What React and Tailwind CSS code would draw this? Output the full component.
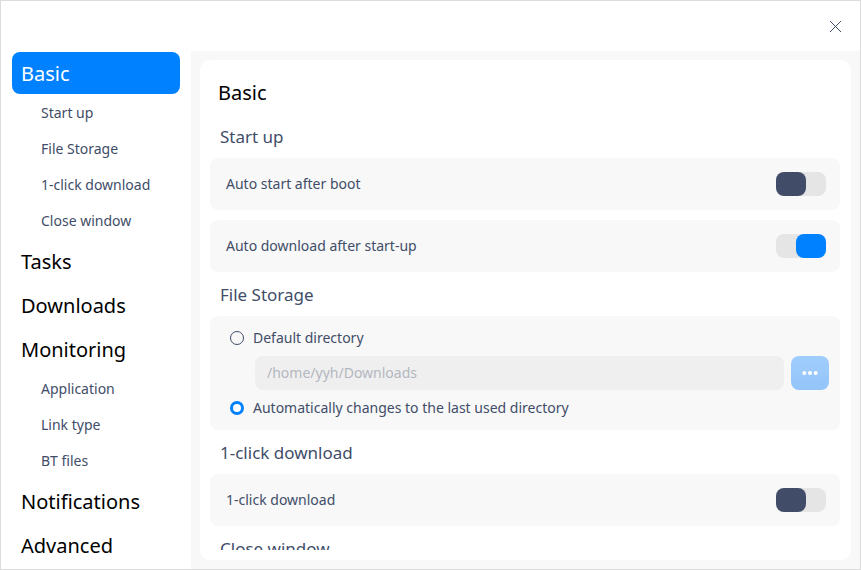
import { useState } from 'react';

const NAV = [
  { name: 'Basic', items: ['Start up', 'File Storage', '1-click download', 'Close window'] },
  { name: 'Tasks', items: [] },
  { name: 'Downloads', items: [] },
  { name: 'Monitoring', items: ['Application', 'Link type', 'BT files'] },
  { name: 'Notifications', items: [] },
  { name: 'Advanced', items: [] },
];

function Sidebar() {
  return (
    <nav className="w-[190px] shrink-0 overflow-y-auto bg-white px-[11px] [scrollbar-width:none]">
      <ul>
        {NAV.map((group, index) => (
          <li key={group.name}>
            <div className="py-px">
              <a
                href="#"
                aria-current={index === 0 ? 'page' : undefined}
                className={
                  'flex h-[42px] items-center rounded-lg px-[9px] pt-0.5 text-xl ' +
                  (index === 0 ? 'bg-[#0081ff] text-white' : 'text-black')
                }
              >
                {group.name}
              </a>
            </div>
            {group.items.length > 0 && (
              <ul>
                {group.items.map((item) => (
                  <li key={item}>
                    <a href="#" className="flex h-9 items-center pl-[29px] text-sm">
                      {item}
                    </a>
                  </li>
                ))}
              </ul>
            )}
          </li>
        ))}
      </ul>
    </nav>
  );
}

function SectionTitle({ children }) {
  return <h2 className="flex h-11 items-center px-2.5 pt-0.5 text-[17px]">{children}</h2>;
}

function ToggleRow({ label, initial = false }) {
  const [on, setOn] = useState(initial);
  return (
    <label className="flex h-[52px] items-center justify-between rounded-lg bg-[#f8f8f8] pr-3.5 pl-4">
      <span>{label}</span>
      <input
        type="checkbox"
        role="switch"
        checked={on}
        onChange={(event) => setOn(event.target.checked)}
        className="flex h-6 w-[50px] appearance-none rounded-lg bg-[#e5e5e5] before:h-6 before:w-[30px] before:rounded-lg before:bg-[#414d68] checked:justify-end checked:before:bg-[#0081ff]"
      />
    </label>
  );
}

function DirectoryOption({ value, label, selected, onSelect }) {
  return (
    <label className="flex h-9 items-center gap-[9px]">
      <input
        type="radio"
        name="directory"
        value={value}
        checked={selected === value}
        onChange={() => onSelect(value)}
        className="size-3.5 appearance-none rounded-full border border-[#414d68] checked:border-3 checked:border-[#0081ff] checked:bg-white"
      />
      {label}
    </label>
  );
}

function FileStorage() {
  const [directory, setDirectory] = useState('last');
  const disabled = directory !== 'default';
  return (
    <div className="rounded-lg bg-[#f8f8f8] py-1 pr-[11px] pl-5">
      <DirectoryOption
        value="default"
        label="Default directory"
        selected={directory}
        onSelect={setDirectory}
      />
      <div className="flex gap-[7px] pl-[25px]">
        <input
          type="text"
          aria-label="Default directory path"
          defaultValue="/home/yyh/Downloads"
          disabled={disabled}
          className="h-[34px] min-w-0 flex-1 rounded-lg bg-[#efefef] px-3 pb-0.5 text-[#b3b7c0]"
        />
        <button
          type="button"
          aria-label="Choose directory"
          disabled={disabled}
          className="flex h-[34px] w-[38px] items-center justify-center rounded-lg bg-linear-to-b from-[#9fcdfc] to-[#94c5f9]"
        >
          <svg width="16" height="4" viewBox="0 0 16 4" fill="white" aria-hidden="true">
            <circle cx="2.3" cy="2" r="2" />
            <circle cx="8" cy="2" r="2" />
            <circle cx="13.7" cy="2" r="2" />
          </svg>
        </button>
      </div>
      <DirectoryOption
        value="last"
        label="Automatically changes to the last used directory"
        selected={directory}
        onSelect={setDirectory}
      />
    </div>
  );
}

export default function App() {
  return (
    <div className="flex h-screen flex-col border border-[#dcdcdc] bg-white font-['Noto_Sans',sans-serif] text-sm text-[#414d68]">
      <header className="flex h-[50px] shrink-0 items-center justify-end">
        <button type="button" aria-label="Close" className="flex size-[50px] items-center justify-center">
          <svg width="12" height="12" viewBox="0 0 12 12" stroke="#414d68" strokeWidth="1" fill="none" aria-hidden="true">
            <path d="M1 1 12 12M12 1 1 12" />
          </svg>
        </button>
      </header>
      <div className="flex min-h-0 flex-1">
        <Sidebar />
        <main className="flex min-w-0 flex-1 bg-[#f8f8f8] p-[9px]">
          <div className="flex min-w-0 flex-1 rounded-[10px] bg-white py-2.5 pr-[11px] pl-2.5">
            <div className="min-w-0 flex-1 overflow-y-auto [scrollbar-width:none]">
              <h1 className="flex h-11 items-center px-2 pt-0.5 text-xl text-black">Basic</h1>
              <section>
                <SectionTitle>Start up</SectionTitle>
                <div className="flex flex-col gap-2.5">
                  <ToggleRow label="Auto start after boot" />
                  <ToggleRow label="Auto download after start-up" initial />
                </div>
              </section>
              <section>
                <SectionTitle>File Storage</SectionTitle>
                <FileStorage />
              </section>
              <section>
                <SectionTitle>1-click download</SectionTitle>
                <ToggleRow label="1-click download" />
              </section>
              <section>
                <SectionTitle>Close window</SectionTitle>
              </section>
            </div>
          </div>
        </main>
      </div>
    </div>
  );
}
